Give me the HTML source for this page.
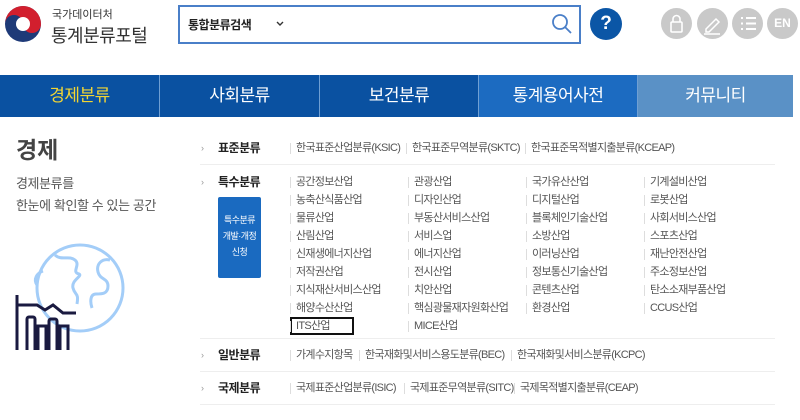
<!DOCTYPE html>
<html><head><meta charset="utf-8"><style>
*{margin:0;padding:0;box-sizing:border-box}
body{width:800px;height:420px;background:#fff;font-family:"Liberation Sans","Noto Sans CJK KR",sans-serif;position:relative;overflow:hidden;color:#333}
.a{position:absolute;white-space:nowrap}
.nav div{position:absolute;top:75px;height:42px;color:#fff;font-size:17px;text-align:center;line-height:42px;border-right:1px solid #6f9fd3;letter-spacing:-0.5px}
.it{position:absolute;font-size:11px;color:#555;white-space:nowrap;line-height:14px;letter-spacing:-0.7px}
.it:before{content:"";position:absolute;left:-6px;top:2px;width:1px;height:11px;background:#ddd}
.lb{position:absolute;left:218px;font-size:12px;font-weight:bold;color:#222;line-height:14px;letter-spacing:-0.5px}
.bu{position:absolute;left:201px;font-size:9px;color:#999;line-height:14px}
.hr{position:absolute;left:200px;width:575px;height:1px;background:#eee}
.gc{position:absolute;top:8px;width:31px;height:31px;border-radius:50%;background:#c9c9c9}
</style></head><body>
<svg class="a" style="left:3px;top:5px" width="40" height="38" viewBox="0 0 40 38">
<circle cx="20" cy="19" r="18" fill="#1e3a78"/>
<path d="M2 19 A18 18 0 0 1 38 19 A9 9 0 0 1 20 19 A9 9 0 0 0 2 19Z" fill="#d21f2e"/>
<circle cx="20" cy="19" r="7" fill="#fff"/>
</svg>
<div class="a" style="left:52px;top:6px;font-size:11px;color:#333">국가데이터처</div>
<div class="a" style="left:51px;top:22px;font-size:18px;color:#333;letter-spacing:-0.5px">통계분류포털</div>
<div class="a" style="left:178px;top:5px;width:403px;height:39px;border:2px solid #4a7fc8"></div>
<div class="a" style="left:188px;top:16px;font-size:12px;font-weight:bold;color:#222;letter-spacing:-0.5px">통합분류검색</div>
<svg class="a" style="left:276px;top:21px" width="8" height="6"><path d="M1 1l3 3 3-3" stroke="#333" stroke-width="1.4" fill="none"/></svg>
<svg class="a" style="left:550px;top:12px" width="24" height="24"><circle cx="10" cy="10" r="7" stroke="#4a7fc8" stroke-width="1.8" fill="none"/><path d="M15 15l6 6" stroke="#4a7fc8" stroke-width="1.8"/></svg>
<div class="a" style="left:590px;top:8px;width:32px;height:32px;border-radius:50%;background:#0b56a6;color:#fff;font-weight:bold;font-size:19px;text-align:center;line-height:32px">?</div>
<div class="gc" style="left:661px"></div><div class="gc" style="left:697px"></div><div class="gc" style="left:732px"></div><div class="gc" style="left:767px;color:#fff;font-size:12px;font-weight:bold;text-align:center;line-height:31px">EN</div>
<svg class="a" style="left:661px;top:8px" width="140" height="31">
<rect x="10" y="14" width="11" height="10" rx="1" fill="none" stroke="#fff" stroke-width="1.6"/><path d="M12 14v-3a3.5 3.5 0 0 1 7 0v3" fill="none" stroke="#fff" stroke-width="1.6"/>
<path d="M45 21l10-10 3 3-10 10h-3z" fill="none" stroke="#fff" stroke-width="1.5"/><path d="M43 26h16" stroke="#fff" stroke-width="1.5"/>
<path d="M80 10h2M80 15.5h2M80 21h2M85 10h10M85 15.5h10M85 21h10" stroke="#fff" stroke-width="2"/>
</svg>
<div class="nav">
<div style="left:0;width:160px;background:#0a51a1;color:#f2d533">경제분류</div>
<div style="left:160px;width:160px;background:#0a51a1">사회분류</div>
<div style="left:320px;width:159px;background:#0a51a1">보건분류</div>
<div style="left:479px;width:159px;background:#1c6bc1">통계용어사전</div>
<div style="left:638px;width:155px;background:#5a91c6;border:none">커뮤니티</div>
</div>
<div class="a" style="left:16px;top:131px;font-size:23px;font-weight:bold;color:#444">경제</div>
<div class="a" style="left:16px;top:173px;font-size:13px;color:#555;line-height:22px;letter-spacing:-0.4px">경제분류를<br>한눈에 확인할 수 있는 공간</div>
<svg class="a" style="left:0;top:230px" width="150" height="120">
<circle cx="80" cy="58" r="43" fill="none" stroke="#a3cdf8" stroke-width="3"/>
<path d="M55 25c6 6 14 0 20 5s-4 12 4 14c4 2-8 6-6 14s6 4 4 16M110 30c-8-2-14 4-12 12s10 6 10 14-6 8-12 8-6 8-4 14" fill="none" stroke="#a3cdf8" stroke-width="3"/>
<path d="M37 55c-4-6 0-12 6-14" fill="none" stroke="#a3cdf8" stroke-width="3"/>
<path d="M17 65v55M17 75h20l8 5 8-5 10 8h13" fill="none" stroke="#1a1a40" stroke-width="3"/>
<rect x="27" y="87" width="8" height="40" rx="2" fill="none" stroke="#1a1a40" stroke-width="3"/>
<rect x="38" y="96" width="8" height="30" fill="none" stroke="#1a1a40" stroke-width="3"/>
<rect x="49" y="89" width="8" height="40" rx="2" fill="none" stroke="#1a1a40" stroke-width="3"/>
<rect x="60" y="96" width="8" height="30" fill="none" stroke="#1a1a40" stroke-width="3"/>
</svg>
<div class="bu" style="top:141px">›</div><div class="lb" style="top:141px">표준분류</div>
<div class="it" style="left:296px;top:141px">한국표준산업분류(KSIC)</div>
<div class="it" style="left:412px;top:141px">한국표준무역분류(SKTC)</div>
<div class="it" style="left:531px;top:141px">한국표준목적별지출분류(KCEAP)</div>
<div class="hr" style="top:164px"></div>
<div class="bu" style="top:175px">›</div><div class="lb" style="top:175px">특수분류</div>
<div class="a" style="left:218px;top:197px;width:43px;height:81px;background:#1a6ac0;border-radius:2px;color:#fff;font-size:9px;text-align:center;line-height:16px;padding-top:15px;letter-spacing:-0.5px">특수분류<br>개발·개정<br>신청</div>
<div class="it" style="left:296px;top:175px">공간정보산업</div><div class="it" style="left:296px;top:193px">농축산식품산업</div><div class="it" style="left:296px;top:211px">물류산업</div><div class="it" style="left:296px;top:229px">산림산업</div><div class="it" style="left:296px;top:247px">신재생에너지산업</div><div class="it" style="left:296px;top:265px">저작권산업</div><div class="it" style="left:296px;top:283px">지식재산서비스산업</div><div class="it" style="left:296px;top:301px">해양수산산업</div>
<div class="a" style="left:290px;top:317px;width:64px;height:18px;border:2px solid #111"></div>
<div class="it" style="left:296px;top:319px">ITS산업</div>
<div class="it" style="left:414px;top:175px">관광산업</div><div class="it" style="left:414px;top:193px">디자인산업</div><div class="it" style="left:414px;top:211px">부동산서비스산업</div><div class="it" style="left:414px;top:229px">서비스업</div><div class="it" style="left:414px;top:247px">에너지산업</div><div class="it" style="left:414px;top:265px">전시산업</div><div class="it" style="left:414px;top:283px">치안산업</div><div class="it" style="left:414px;top:301px">핵심광물재자원화산업</div><div class="it" style="left:414px;top:319px">MICE산업</div>
<div class="it" style="left:532px;top:175px">국가유산산업</div><div class="it" style="left:532px;top:193px">디지털산업</div><div class="it" style="left:532px;top:211px">블록체인기술산업</div><div class="it" style="left:532px;top:229px">소방산업</div><div class="it" style="left:532px;top:247px">이러닝산업</div><div class="it" style="left:532px;top:265px">정보통신기술산업</div><div class="it" style="left:532px;top:283px">콘텐츠산업</div><div class="it" style="left:532px;top:301px">환경산업</div>
<div class="it" style="left:650px;top:175px">기계설비산업</div><div class="it" style="left:650px;top:193px">로봇산업</div><div class="it" style="left:650px;top:211px">사회서비스산업</div><div class="it" style="left:650px;top:229px">스포츠산업</div><div class="it" style="left:650px;top:247px">재난안전산업</div><div class="it" style="left:650px;top:265px">주소정보산업</div><div class="it" style="left:650px;top:283px">탄소소재부품산업</div><div class="it" style="left:650px;top:301px">CCUS산업</div>
<div class="hr" style="top:338px"></div>
<div class="bu" style="top:348px">›</div><div class="lb" style="top:348px">일반분류</div>
<div class="it" style="left:296px;top:348px">가계수지항목</div><div class="it" style="left:365px;top:348px">한국재화및서비스용도분류(BEC)</div><div class="it" style="left:517px;top:348px">한국재화및서비스분류(KCPC)</div>
<div class="hr" style="top:371px"></div>
<div class="bu" style="top:381px">›</div><div class="lb" style="top:381px">국제분류</div>
<div class="it" style="left:296px;top:381px">국제표준산업분류(ISIC)</div><div class="it" style="left:410px;top:381px">국제표준무역분류(SITC)</div><div class="it" style="left:520px;top:381px">국제목적별지출분류(CEAP)</div>
<div class="hr" style="top:404px"></div>
</body></html>
